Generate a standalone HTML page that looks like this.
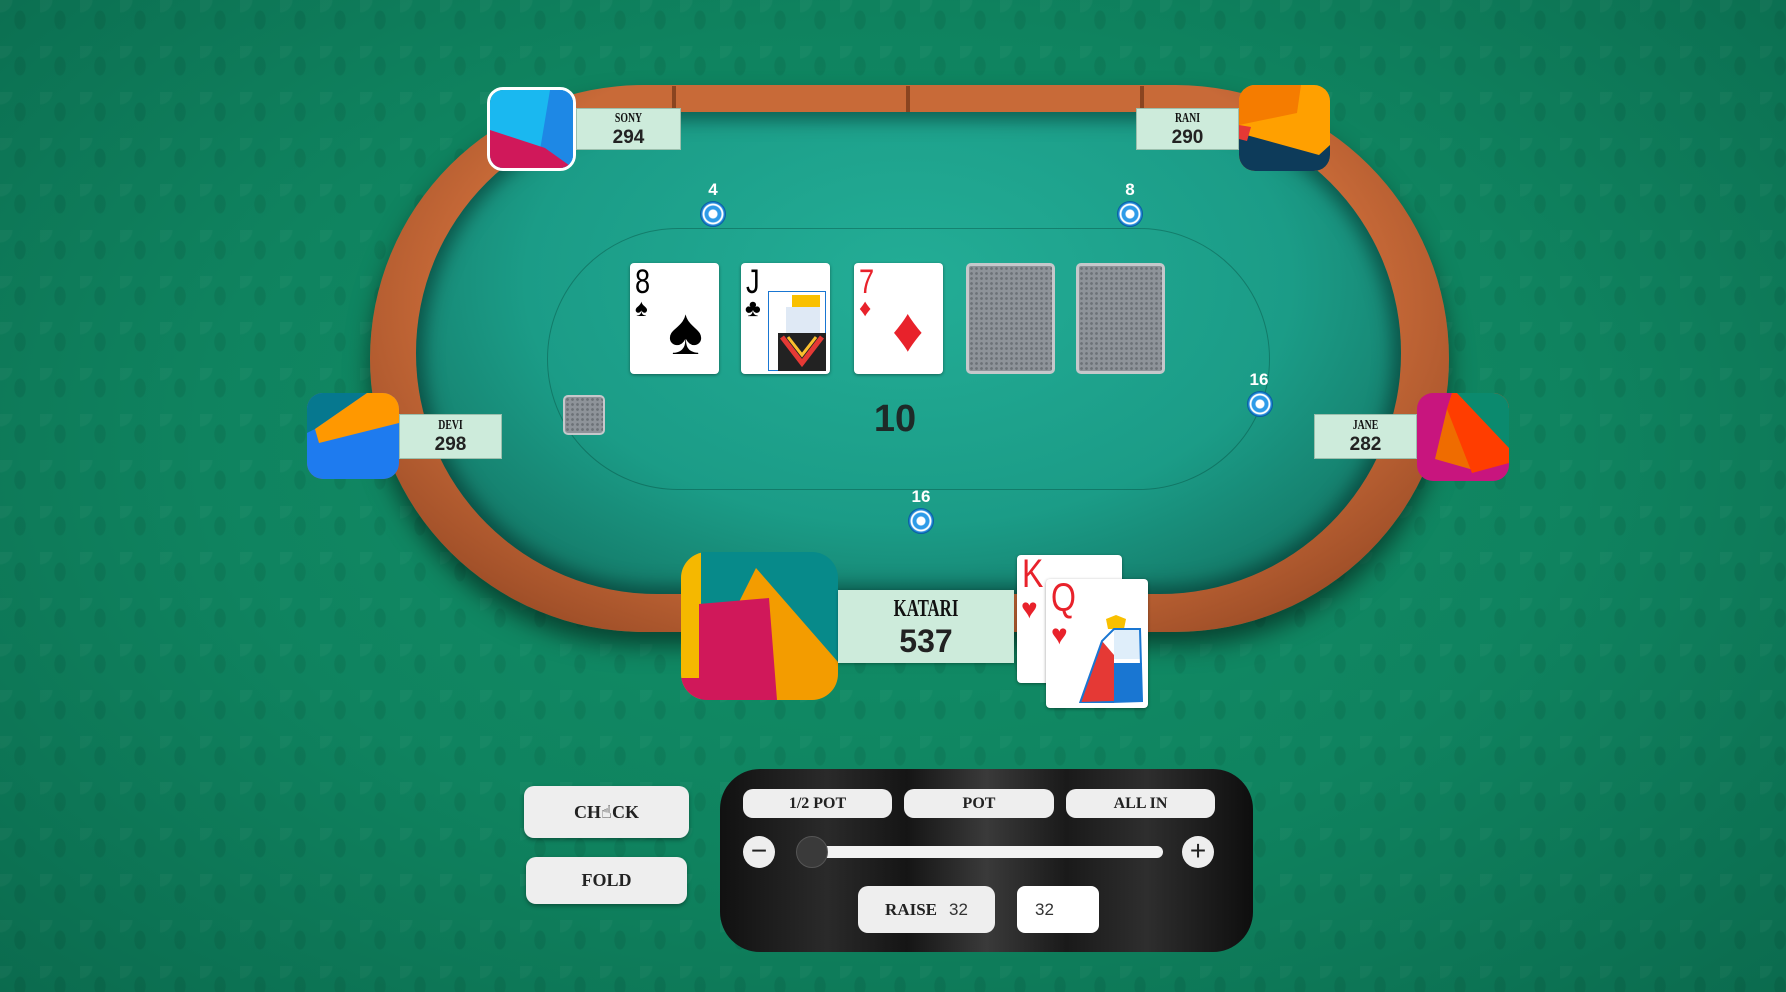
<!DOCTYPE html>
<html><head><meta charset="utf-8"><style>
*{margin:0;padding:0;box-sizing:border-box}
body{width:1786px;height:992px;overflow:hidden;position:relative;font-family:"Liberation Sans",sans-serif;
background:radial-gradient(ellipse at 50% 45%,#12916a 0%,#0f835f 55%,#0b6b4e 100%);}
.pat{position:absolute;inset:0;background-image:radial-gradient(ellipse 6px 10px at 20px 20px,rgba(0,0,0,.07) 90%,transparent 100%),radial-gradient(circle at 0 0,rgba(255,255,255,.03) 12px,transparent 13px);background-size:40px 46px;}
.abs{position:absolute}
.rail{left:370px;top:85px;width:1079px;height:547px;border-radius:274px;background:radial-gradient(ellipse at 50% 40%,#c86a38 60%,#a4522a 80%,#7a3616 100%);box-shadow:0 14px 24px rgba(0,0,0,.5)}
.felt{left:416px;top:112px;width:985px;height:482px;border-radius:241px;background:radial-gradient(ellipse at 50% 35%,#23ad96 0%,#1b9c87 55%,#157e6c 80%,#0e5d50 100%);box-shadow:inset 0 0 18px 8px rgba(0,40,35,.55)}
.line{left:547px;top:228px;width:723px;height:262px;border-radius:131px;border:1.5px solid rgba(0,60,50,.35)}
.av{border-radius:16px;overflow:hidden}
.lab{background:#cdebdb;border:1px solid #9bbfad;text-align:center;color:#222}
.nm{font-family:"Liberation Serif",serif;font-weight:bold;display:block;transform:scaleX(.7);letter-spacing:0;color:#111}
.card{background:#fff;border-radius:4px;box-shadow:0 1px 3px rgba(0,0,0,.4)}
.back{background:#8e9399;background-image:radial-gradient(circle,#6d7278 1.2px,transparent 1.6px);background-size:5px 5px;border:3px solid #c5c8cb;border-radius:5px}
.rk{font-family:"Liberation Sans Narrow","Liberation Sans",sans-serif;font-size:34px;line-height:34px;position:absolute;left:5px;top:2px;transform:scaleX(.8);transform-origin:left}
.num{color:#fff;font-weight:bold;font-size:17px;text-align:center;width:40px}
.chip{width:26px;height:26px;border-radius:50%;background:radial-gradient(circle,#fff 0 4px,#2e9be8 5px 8px,#fff 9px 10px,#1f86d6 11px);border:1px solid #0c5fa3}
.btn{background:#eeeeee;border-radius:10px;box-shadow:0 2px 4px rgba(0,0,0,.35);display:flex;align-items:center;justify-content:center;font-family:"Liberation Serif",serif;font-weight:bold;color:#222}
.pb{background:#eee;border-radius:10px;display:flex;align-items:center;justify-content:center;font-family:"Liberation Serif",serif;font-weight:bold;color:#222;font-size:16px}
</style></head><body>
<div class="pat"></div>
<div class="abs rail"></div>
<div class="abs" style="left:672px;top:86px;width:4px;height:30px;background:#8a4420"></div>
<div class="abs" style="left:906px;top:86px;width:4px;height:30px;background:#8a4420"></div>
<div class="abs" style="left:1140px;top:86px;width:4px;height:30px;background:#8a4420"></div>
<div class="abs felt"></div>
<div class="abs line"></div>

<div class="abs av" style="left:487px;top:87px;width:89px;height:84px;border:3px solid #fff;">
<svg width="83" height="78" viewBox="0 0 83 78"><rect width="83" height="78" fill="#1ab8f0"/><polygon points="60,0 83,0 83,78 50,60" fill="#1e88e5"/><polygon points="0,40 55,58 83,78 0,78" fill="#d0185a"/></svg></div>
<div class="abs lab" style="left:576px;top:108px;width:105px;height:42px"><span class="nm" style="font-size:14px;margin-top:2px">SONY</span><span style="font-size:19px;font-weight:bold">294</span></div>
<div class="abs lab" style="left:1136px;top:108px;width:103px;height:42px"><span class="nm" style="font-size:14px;margin-top:2px">RANI</span><span style="font-size:19px;font-weight:bold">290</span></div>
<div class="abs av" style="left:1239px;top:85px;width:91px;height:86px">
<svg width="91" height="86"><rect width="91" height="86" fill="#ffa000"/><polygon points="0,0 62,0 58,28 0,40" fill="#f57c00"/><polygon points="0,48 80,70 91,60 91,86 0,86" fill="#0d3b5a"/><polygon points="0,40 12,42 8,56 0,54" fill="#e53935"/></svg></div>
<div class="abs av" style="left:307px;top:393px;width:92px;height:86px">
<svg width="92" height="86"><rect width="92" height="86" fill="#e53950"/><rect x="0" y="0" width="92" height="86" rx="14" fill="#1e7bef"/><polygon points="0,0 60,0 8,36 0,40" fill="#06788f"/><polygon points="60,0 92,0 92,30 12,50 8,36" fill="#ff9800"/></svg></div>
<div class="abs lab" style="left:399px;top:414px;width:103px;height:45px"><span class="nm" style="font-size:14px;margin-top:3px">DEVI</span><span style="font-size:19px;font-weight:bold">298</span></div>
<div class="abs lab" style="left:1314px;top:414px;width:103px;height:45px"><span class="nm" style="font-size:14px;margin-top:3px">JANE</span><span style="font-size:19px;font-weight:bold">282</span></div>
<div class="abs av" style="left:1417px;top:393px;width:92px;height:88px">
<svg width="92" height="88"><rect width="92" height="88" fill="#c8157e"/><polygon points="35,0 92,0 92,60 60,78 18,66 30,16" fill="#ef6c00"/><polygon points="35,0 92,0 92,70 55,80 30,16" fill="#ff3d00"/><polygon points="40,0 92,0 92,55" fill="#0b8a6e"/></svg></div>

<div class="abs num" style="left:693px;top:180px">4</div><div class="abs chip" style="left:700px;top:201px"></div>
<div class="abs num" style="left:1110px;top:180px">8</div><div class="abs chip" style="left:1117px;top:201px"></div>
<div class="abs num" style="left:1239px;top:370px">16</div><div class="abs chip" style="left:1247px;top:391px"></div>
<div class="abs num" style="left:901px;top:487px">16</div><div class="abs chip" style="left:908px;top:508px"></div>

<div class="abs back" style="left:563px;top:395px;width:42px;height:40px;border-width:2px"></div>

<div class="abs card" style="left:630px;top:263px;width:89px;height:111px"><span class="rk">8</span><span class="abs" style="left:5px;top:32px;font-size:24px">♠</span><span class="abs" style="left:38px;top:30px;font-size:66px">♠</span></div>
<div class="abs card" style="left:741px;top:263px;width:89px;height:111px;overflow:hidden"><span class="rk">J</span><span class="abs" style="left:4px;top:32px;font-size:24px">♣</span>
<svg class="abs" style="left:27px;top:28px" width="58" height="80"><rect x="0" y="0" width="58" height="80" fill="#fff" stroke="#1976d2" stroke-width="2"/><polygon points="24,4 52,4 52,16 24,16" fill="#f9c000"/><rect x="18" y="16" width="34" height="26" fill="#dfe9f5"/><polygon points="10,42 58,42 58,80 10,80" fill="#222"/><polyline points="14,46 34,72 54,46" fill="none" stroke="#e53935" stroke-width="5"/><polyline points="20,46 34,64 48,46" fill="none" stroke="#fbc02d" stroke-width="3"/></svg></div>
<div class="abs card" style="left:854px;top:263px;width:89px;height:111px;color:#e8222b"><span class="rk">7</span><span class="abs" style="left:5px;top:32px;font-size:24px">♦</span><span class="abs" style="left:38px;top:32px;font-size:62px">♦</span></div>
<div class="abs back" style="left:966px;top:263px;width:89px;height:111px"></div>
<div class="abs back" style="left:1076px;top:263px;width:89px;height:111px"></div>

<div class="abs" style="left:855px;top:398px;width:80px;text-align:center;font-size:38px;font-weight:bold;color:#1e2a28">10</div>

<div class="abs av" style="left:681px;top:552px;width:157px;height:148px;border-radius:26px">
<svg width="157" height="148"><rect width="157" height="148" fill="#078a8a"/><rect width="20" height="148" fill="#f5b800"/><polygon points="75,16 157,110 157,148 95,148 58,50" fill="#f39c00"/><polygon points="18,52 88,46 96,148 0,148 0,126 18,126" fill="#d0185a"/></svg></div>
<div class="abs lab" style="left:838px;top:590px;width:176px;height:73px;border:none;box-shadow:0 1px 3px rgba(0,0,0,.3)"><span class="nm" style="font-size:24px;margin-top:6px">KATARI</span><span style="font-size:32px;font-weight:bold;line-height:36px">537</span></div>
<div class="abs card" style="left:1017px;top:555px;width:105px;height:128px;color:#e8222b"><span class="rk" style="font-size:40px">K</span><span class="abs" style="left:4px;top:38px;font-size:28px">♥</span></div>
<div class="abs card" style="left:1046px;top:579px;width:102px;height:129px;color:#e8222b;overflow:hidden"><span class="rk" style="font-size:40px">Q</span><span class="abs" style="left:5px;top:40px;font-size:28px">♥</span>
<svg class="abs" style="left:30px;top:36px" width="68" height="88"><polygon points="30,4 40,0 50,4 48,14 32,14" fill="#f9c000"/><rect x="38" y="14" width="26" height="30" fill="#dfeefa"/><polygon points="4,88 26,26 38,40 38,88" fill="#e53935"/><rect x="38" y="48" width="28" height="38" fill="#1976d2"/><path d="M4 88 L26 26 L38 14 L64 14 L66 86 Z" fill="none" stroke="#1976d2" stroke-width="2"/></svg></div>

<div class="abs btn" style="left:524px;top:786px;width:165px;height:52px;font-size:18px">CH<span style="font-family:'DejaVu Sans';font-size:18px">☝</span>CK</div>
<div class="abs btn" style="left:526px;top:857px;width:161px;height:47px;font-size:18px">FOLD</div>

<div class="abs" style="left:720px;top:769px;width:533px;height:183px;border-radius:40px;background:linear-gradient(90deg,#111 0%,#2a2a2a 20%,#151515 35%,#3a3a3a 50%,#1a1a1a 65%,#2e2e2e 80%,#0e0e0e 100%)"></div>
<div class="abs pb" style="left:743px;top:789px;width:149px;height:29px">1/2 POT</div>
<div class="abs pb" style="left:904px;top:789px;width:150px;height:29px">POT</div>
<div class="abs pb" style="left:1066px;top:789px;width:149px;height:29px">ALL IN</div>
<div class="abs" style="left:743px;top:836px;width:32px;height:32px;border-radius:50%;background:#eee;font-size:28px;line-height:30px;text-align:center;color:#222">−</div>
<div class="abs" style="left:811px;top:846px;width:352px;height:12px;border-radius:6px;background:#f2f2f2"></div>
<div class="abs" style="left:796px;top:836px;width:32px;height:32px;border-radius:50%;background:#3a3a3a;border:1px solid #555"></div>
<div class="abs" style="left:1182px;top:836px;width:32px;height:32px;border-radius:50%;background:#eee;font-size:28px;line-height:30px;text-align:center;color:#222">+</div>
<div class="abs pb" style="left:858px;top:886px;width:137px;height:47px;font-size:17px">RAISE<span style="font-family:'Liberation Sans';font-weight:normal;margin-left:12px;color:#333">32</span></div>
<div class="abs" style="left:1017px;top:886px;width:82px;height:47px;border-radius:8px;background:#fff;font-size:17px;line-height:47px;padding-left:18px;color:#333">32</div>
</body></html>
